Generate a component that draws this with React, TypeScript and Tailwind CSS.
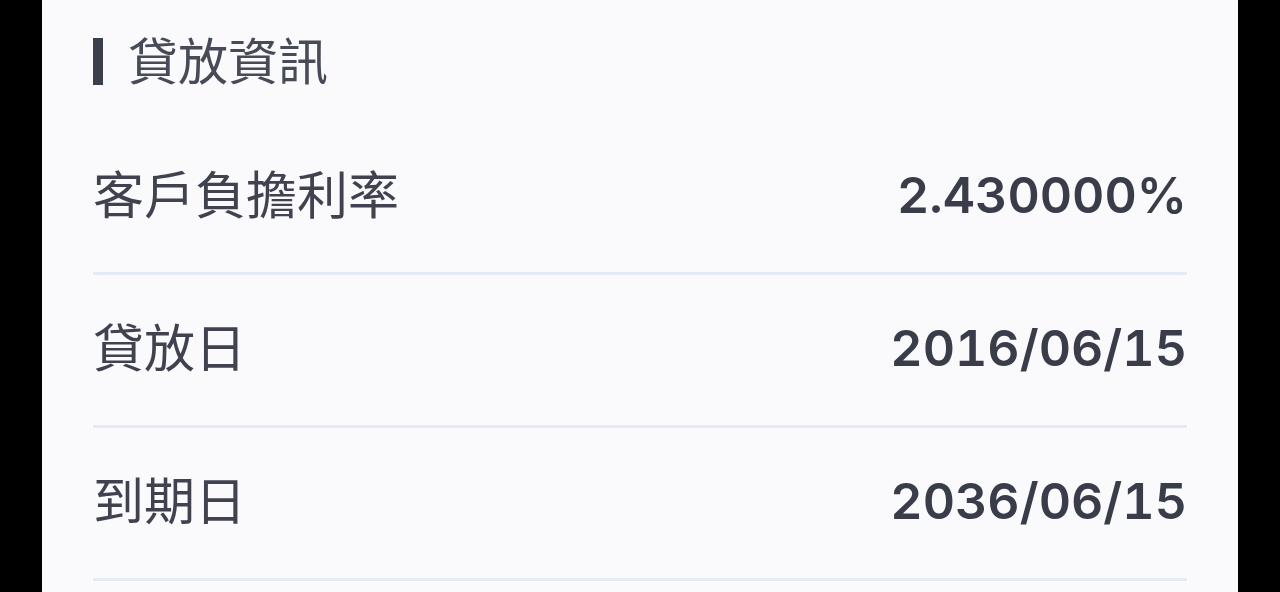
import React from "react";

const rows = [
  { label: "客戶負擔利率", value: "2.430000%" },
  { label: "貸放日", value: "2016/06/15" },
  { label: "到期日", value: "2036/06/15" },
];

const cjk = { fontFamily: '"Noto Sans CJK TC", "Noto Sans", sans-serif' };
const num = { fontFamily: 'Inter, "Noto Sans CJK TC", sans-serif' };

export default function App() {
  return (
    <div className="h-[592px] w-full overflow-hidden bg-black">
      <div className="mx-auto h-full w-[1196px] bg-[#fafafc] px-[51px]">
        {/* 標題 */}
        <div className="flex h-[122px] items-center">
          <div className="h-[47px] w-[10px] bg-[#3b3e4b]" />
          <h2 className="mb-[6px] ml-[25px] text-[50px] leading-none text-[#474a57]" style={cjk}>
            貸放資訊
          </h2>
        </div>

        {rows.map(row => (
          <div key={row.label}>
            <div className="flex h-[150px] items-center justify-between pb-[9px]">
              <span className="text-[51px] leading-none text-[#40434f]" style={cjk}>
                {row.label}
              </span>
              <span className="mt-[4px] text-[50px] font-semibold leading-none tabular-nums text-[#393c49]" style={num}>
                {row.value}
              </span>
            </div>
            <div className="h-[3px] bg-[#e4eaf6]" />
          </div>
        ))}
      </div>
    </div>
  );
}
